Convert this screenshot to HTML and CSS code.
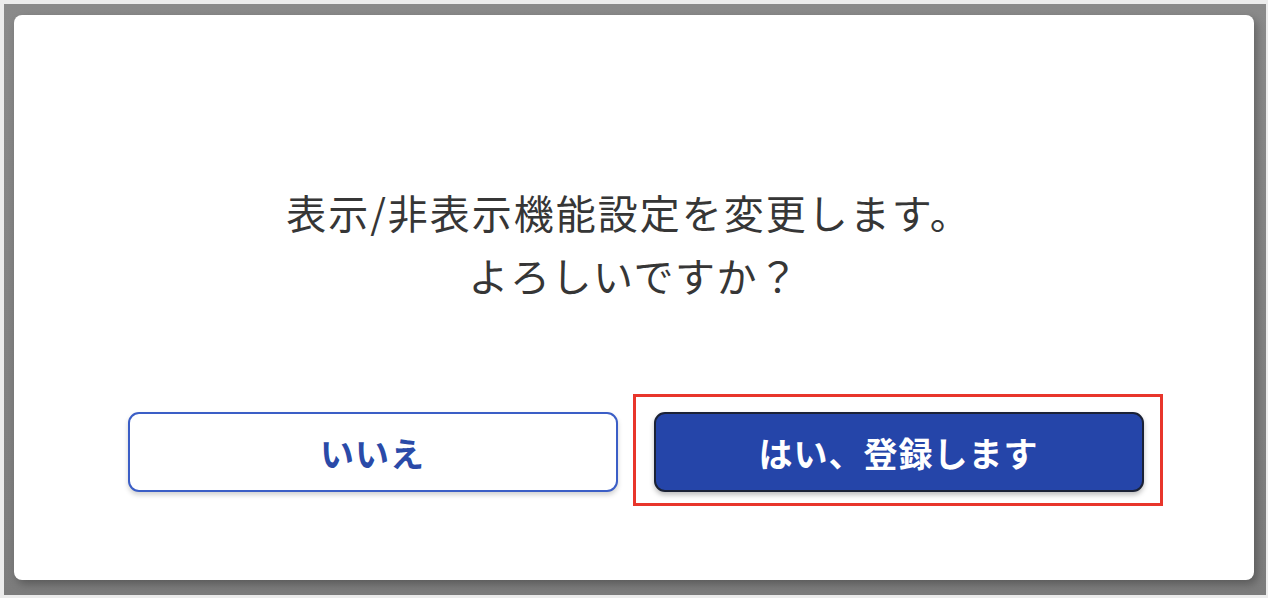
FILE: index.html
```html
<!DOCTYPE html>
<html lang="ja">
<head>
<meta charset="utf-8">
<link rel="stylesheet" href="styles.css">
</head>
<body>
<div class="frame">
  <div class="dialog">
    <div class="message">
      <p class="line line-main">表示/非表示機能設定を変更します。</p>
      <p class="line">よろしいですか？</p>
    </div>
    <div class="actions">
      <button class="btn btn-no">いいえ</button>
      <div class="highlight-wrap">
        <button class="btn btn-yes">はい、登録します</button>
        <span class="highlight"></span>
      </div>
    </div>
  </div>
</div>
</body>
</html>
```

FILE: styles.css
```css
html, body {
  margin: 0;
  padding: 0;
  background: #ececec;
}
body {
  width: 1268px;
  height: 598px;
  padding: 4px 2px 3px 4px;
  box-sizing: border-box;
  font-family: "Noto Sans CJK JP", "Noto Sans", sans-serif;
}
.frame {
  height: 100%;
  box-sizing: border-box;
  padding: 11px 12px 15px 10px;
  background: linear-gradient(180deg, #8a8a8a 0%, #7c7c7c 100%);
}
.dialog {
  height: 100%;
  background: #ffffff;
  border-radius: 8px;
  box-shadow: 3px 4px 8px rgba(0, 0, 0, 0.28);
  box-sizing: border-box;
  padding-top: 166px;
  display: flex;
  flex-direction: column;
  align-items: center;
}
.message {
  text-align: center;
  color: #363636;
  font-size: 40px;
  line-height: 63px;
  letter-spacing: 1.5px;
}
.line {
  margin: 0;
}
.line-main {
  letter-spacing: 2px;
  padding-right: 10px;
}
.actions {
  margin-top: 105px;
  display: flex;
  gap: 36px;
  padding-left: 3px;
}
.btn {
  width: 490px;
  height: 80px;
  border-radius: 11px;
  font-family: "Noto Sans CJK JP", "Noto Sans", sans-serif;
  font-size: 34px;
  font-weight: 700;
  letter-spacing: 1px;
  box-sizing: border-box;
  display: block;
  padding: 0;
}
.btn-no {
  background: #ffffff;
  color: #2a4aa8;
  border: 2px solid #3b5ec6;
  box-shadow: 0 3px 5px rgba(0, 0, 0, 0.18);
}
.btn-yes {
  background: #2545a9;
  color: #ffffff;
  border: 2px solid #1b2236;
  box-shadow: 0 3px 5px rgba(0, 0, 0, 0.25);
}
.highlight-wrap {
  position: relative;
}
.highlight {
  position: absolute;
  top: -18px;
  left: -21px;
  right: -19px;
  bottom: -14px;
  border: 3px solid #e8352b;
  pointer-events: none;
}
```
